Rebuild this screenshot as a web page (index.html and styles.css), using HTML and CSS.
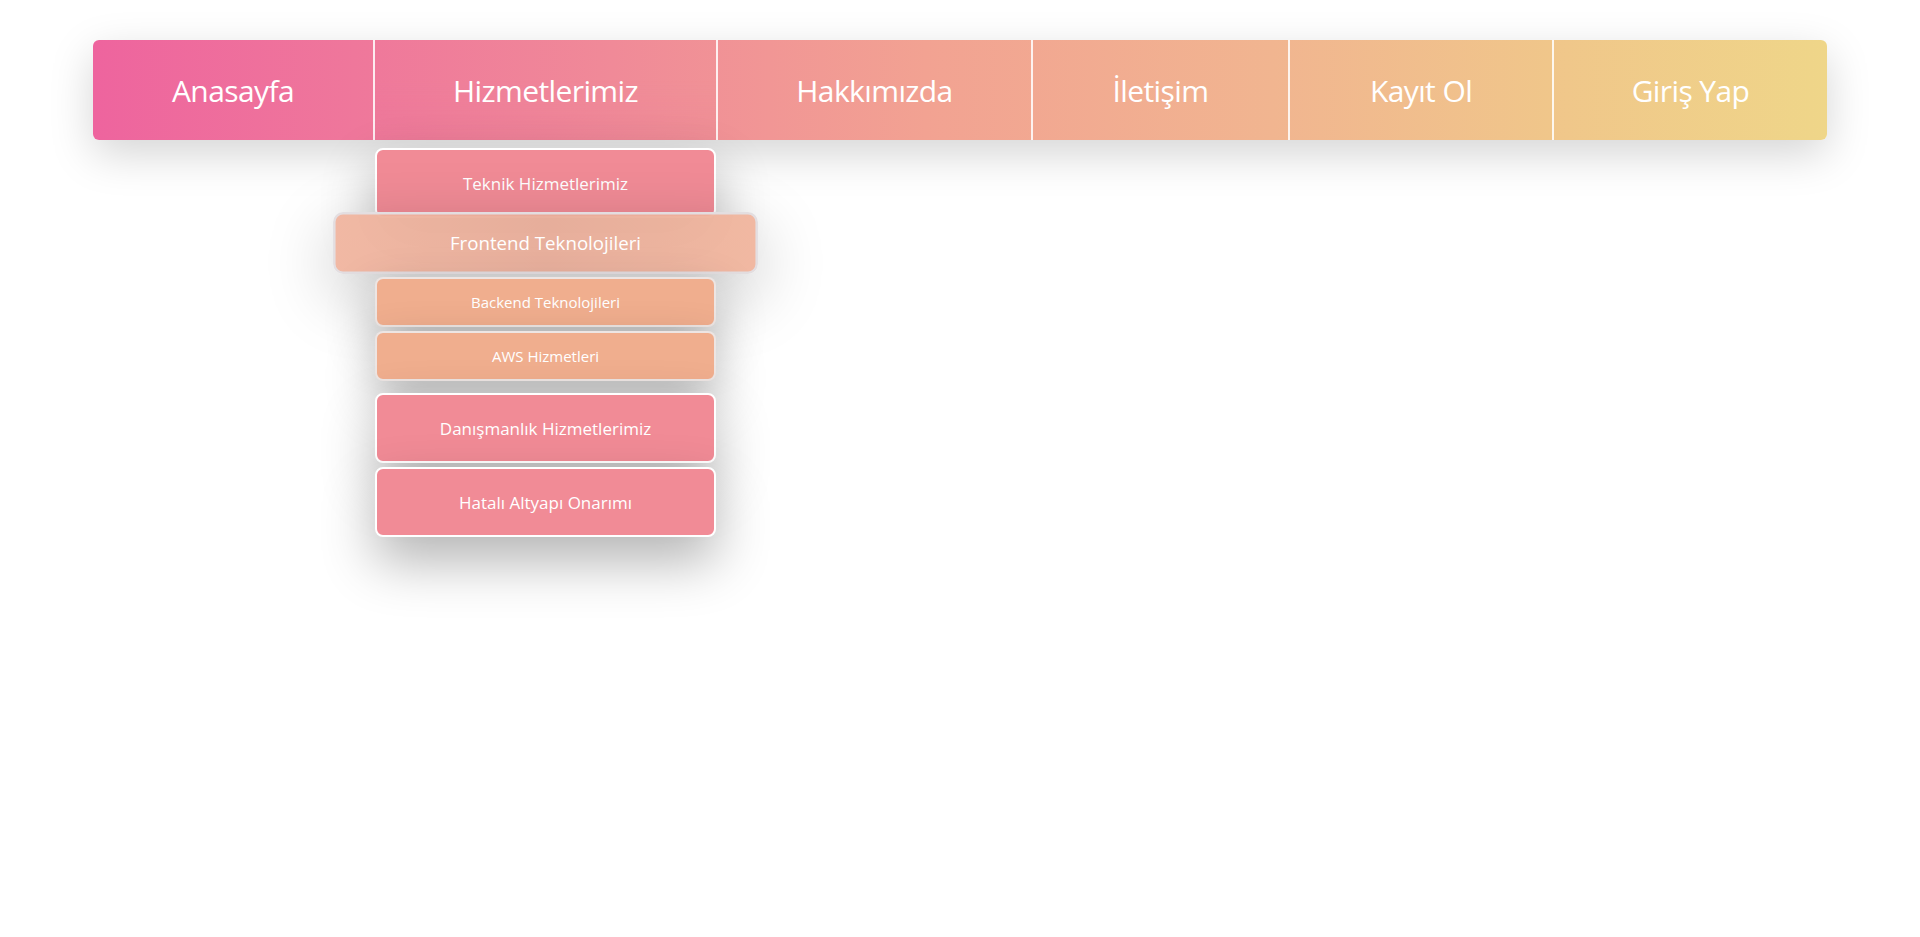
FILE: index.html
```html
<!DOCTYPE html>
<html lang="tr">
<head>
<meta charset="utf-8">
<title>Menü</title>
<link rel="stylesheet" href="styles.css">
</head>
<body>
<nav class="menu">
  <ul class="menu-list">
    <li class="menu-item"><a class="menu-link" href="#">Anasayfa</a></li>
    <li class="menu-item has-dropdown">
      <a class="menu-link" href="#">Hizmetlerimiz</a>
      <ul class="dropdown">
        <li class="drop-item">
          <a class="drop-link" href="#">Teknik Hizmetlerimiz</a>
          <ul class="submenu">
            <li class="sub-item sub-front is-hover"><a class="sub-link" href="#">Frontend Teknolojileri</a></li>
            <li class="sub-item sub-back"><a class="sub-link" href="#">Backend Teknolojileri</a></li>
            <li class="sub-item sub-aws"><a class="sub-link" href="#">AWS Hizmetleri</a></li>
          </ul>
        </li>
        <li class="drop-item drop-consult"><a class="drop-link" href="#">Danışmanlık Hizmetlerimiz</a></li>
        <li class="drop-item drop-repair"><a class="drop-link" href="#">Hatalı Altyapı Onarımı</a></li>
      </ul>
    </li>
    <li class="menu-item"><a class="menu-link" href="#">Hakkımızda</a></li>
    <li class="menu-item"><a class="menu-link" href="#">İletişim</a></li>
    <li class="menu-item"><a class="menu-link" href="#">Kayıt Ol</a></li>
    <li class="menu-item"><a class="menu-link" href="#">Giriş Yap</a></li>
  </ul>
</nav>
</body>
</html>
```
FILE: styles.css
```css
* { box-sizing: border-box; }

html, body {
  margin: 0;
  padding: 0;
  background: #ffffff;
  font-family: "Open Sans", "Noto Sans", "Liberation Sans", sans-serif;
}

body {
  min-height: 937px;
  padding-top: 40px;
}

ul { list-style: none; margin: 0; padding: 0; }
a { text-decoration: none; color: #ffffff; }

.menu {
  width: 1734px;
  margin: 0 auto;
}

.menu-list {
  display: grid;
  grid-template-columns: 280px 343px 315px 257px 264px 275px;
  height: 100px;
  border-radius: 6px;
  background: linear-gradient(90deg, #ee649e 0%, #f08a98 30%, #f2a292 48%, #f1b590 68%, #f0c68a 84%, #efd689 100%);
  box-shadow: 0 14px 44px rgba(0, 0, 0, 0.17);
}

.menu-item {
  position: relative;
  display: flex;
  align-items: center;
  justify-content: center;
  border-left: 2px solid rgba(255, 255, 255, 0.85);
}
.menu-item:first-child { border-left: none; }

.menu-link {
  font-size: 30px;
  letter-spacing: -0.6px;
  color: #ffffff;
}

.has-dropdown {
  background: linear-gradient(180deg, rgba(230, 100, 140, 0) 40%, rgba(220, 110, 140, 0.12) 100%);
}

.dropdown {
  position: absolute;
  top: 108px;
  left: 0;
  width: 341px;
  display: flex;
  flex-direction: column;
  z-index: 5;
}

.drop-item {
  position: relative;
  display: flex;
  flex-direction: column;
}

.drop-link,
.sub-link {
  display: flex;
  align-items: center;
  justify-content: center;
  color: #ffffff;
  border-radius: 8px;
}

.drop-link {
  height: 70px;
  font-size: 17px;
  border: 2px solid #ffffff;
  background: #f18b96;
  box-shadow: 0 24px 54px rgba(0, 0, 0, 0.3);
}

.drop-consult { margin-top: 12px; }
.drop-repair { margin-top: 4px; }

.submenu { display: flex; flex-direction: column; }

.sub-item { position: relative; }

.sub-link {
  height: 50px;
  font-size: 15px;
  border: 2px solid rgba(236, 232, 232, 0.95);
  background: #f0ae8e;
  box-shadow: 0 22px 50px rgba(0, 0, 0, 0.3);
}

.sub-back { margin-top: 9px; }
.sub-aws { margin-top: 4px; }

.sub-front .sub-link {
  transform: scale(1.246, 1.24);
  border-color: rgba(226, 226, 232, 0.9);
  background: linear-gradient(90deg, rgba(240, 180, 158, 0.94) 0%, rgba(232, 172, 152, 0.94) 50%, rgba(240, 180, 156, 0.94) 100%);
  box-shadow: 0 16px 56px rgba(0, 0, 0, 0.22);
  font-size: 15px;
}
```
